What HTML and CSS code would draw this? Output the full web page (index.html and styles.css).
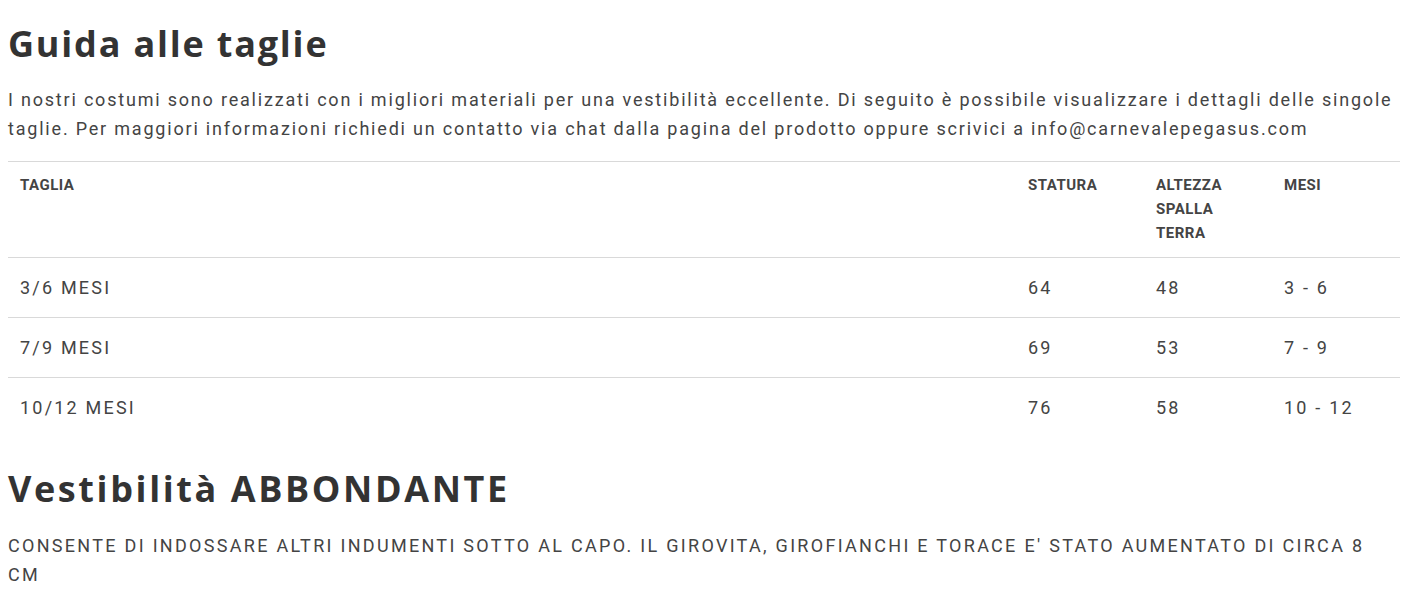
FILE: index.html
```html
<!DOCTYPE html>
<html lang="it">
<head>
    <meta charset="UTF-8">
    <meta name="viewport" content="width=device-width, initial-scale=1.0">
    <title>Guida alle taglie</title>
    <link rel="stylesheet" href="styles.css">
</head>
<body>
<div class="guide">
    <h2 class="title">Guida alle taglie</h2>
    <p class="intro">I nostri costumi sono realizzati con i migliori materiali per una vestibilità eccellente. Di seguito è possibile visualizzare i dettagli delle singole taglie. Per maggiori informazioni richiedi un contatto via chat dalla pagina del prodotto oppure scrivici a info@carnevalepegasus.com</p>

    <table class="sizes">
        <colgroup>
            <col>
            <col class="narrow">
            <col class="narrow">
            <col class="narrow">
        </colgroup>
        <thead>
            <tr>
                <th>Taglia</th>
                <th>Statura</th>
                <th>Altezza spalla terra</th>
                <th>Mesi</th>
            </tr>
        </thead>
        <tbody>
            <tr>
                <td>3/6 MESI</td>
                <td>64</td>
                <td>48</td>
                <td>3 - 6</td>
            </tr>
            <tr>
                <td>7/9 MESI</td>
                <td>69</td>
                <td>53</td>
                <td>7 - 9</td>
            </tr>
            <tr>
                <td>10/12 MESI</td>
                <td>76</td>
                <td>58</td>
                <td>10 - 12</td>
            </tr>
        </tbody>
    </table>

    <h2 class="title fit">Vestibilità ABBONDANTE</h2>
    <p class="intro note">CONSENTE DI INDOSSARE ALTRI INDUMENTI SOTTO AL CAPO. IL GIROVITA, GIROFIANCHI E TORACE E' STATO AUMENTATO DI CIRCA 8 CM</p>
</div>
</body>
</html>
```

FILE: styles.css
```css
body {
    margin: 0;
    padding: 0 8px;
    background-color: #ffffff;
    font-family: Roboto, "Liberation Sans", Arial, sans-serif;
    color: #444444;
}
.guide {
    padding-top: 22px;
}
.title {
    margin: 0;
    font-family: "Open Sans", "DejaVu Sans", sans-serif;
    font-weight: 700;
    font-size: 36px;
    line-height: 44px;
    color: #333333;
    letter-spacing: 1.8px;
}
.title.fit {
    margin-top: 30px;
    letter-spacing: 2.6px;
}
.intro {
    margin: 19px 0 18px;
    font-size: 18px;
    line-height: 29px;
    letter-spacing: 1.8px;
    color: #444444;
}
.intro.note {
    margin: 20px 0 0;
    padding-right: 12px;
    letter-spacing: 2.3px;
}
.sizes {
    width: 100%;
    border-collapse: collapse;
    border-top: 1px solid #d9d9d9;
}
.sizes .narrow {
    width: 128px;
}
.sizes th {
    text-align: left;
    vertical-align: top;
    padding: 11px 12px 12px;
    font-size: 15px;
    line-height: 24px;
    font-weight: 700;
    letter-spacing: 0.5px;
    text-transform: uppercase;
    color: #444444;
    border-bottom: 1px solid #d9d9d9;
}
.sizes td {
    padding: 16px 12px;
    font-size: 18px;
    line-height: 27px;
    letter-spacing: 2.2px;
    color: #444444;
    border-bottom: 1px solid #d9d9d9;
}
.sizes tbody tr:last-child td {
    border-bottom: none;
}
```
